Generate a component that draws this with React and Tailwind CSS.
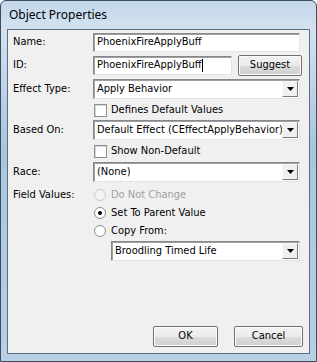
import { useState } from 'react';

const font = { fontFamily: '"DejaVu Sans Condensed", "DejaVu Sans", sans-serif' };

function Arrow() {
  return (
    <svg width="7" height="4" viewBox="0 0 7 4">
      <path d="M0 0h7L3.5 4z" fill="#000" />
    </svg>
  );
}

function Edit({ value, className = '', caret }) {
  return (
    <div
      className={`h-[19px] bg-white border border-t-[#828790] border-l-[#828790] border-r-[#e3e3e3] border-b-[#e3e3e3] shadow-[inset_1px_1px_0_#a0a0a0] flex items-center pl-[3px] text-[11px] text-black whitespace-nowrap ${className}`}
    >
      {value}
      {caret && <span className="w-px h-[13px] bg-black" />}
    </div>
  );
}

function Combo({ value, className = '' }) {
  return (
    <div
      className={`h-[20px] bg-white border border-t-[#828790] border-l-[#828790] border-r-[#e3e3e3] border-b-[#e3e3e3] shadow-[inset_1px_1px_0_#a0a0a0] flex items-center text-[11px] text-black whitespace-nowrap ${className}`}
    >
      <span className="flex-1 pl-[3px] overflow-hidden">{value}</span>
      <span className="w-[16px] h-[16px] mr-px bg-[#f0f0f0] border border-t-[#f8f8f8] border-l-[#f8f8f8] border-r-[#7a7a7a] border-b-[#7a7a7a] flex items-center justify-center">
        <Arrow />
      </span>
    </div>
  );
}

function Check({ label }) {
  return (
    <div className="flex items-center h-[15px] text-[11px] text-black whitespace-nowrap">
      <span className="w-[13px] h-[13px] bg-white border border-[#8f8f8f] shadow-[inset_1px_1px_0_#d8d8d8]" />
      <span className="ml-[4px]">{label}</span>
    </div>
  );
}

function Radio({ label, checked, disabled }) {
  return (
    <div className={`flex items-center h-[18px] text-[11px] whitespace-nowrap ${disabled ? 'text-[#a0a0a0]' : 'text-black'}`}>
      <span
        className={`w-[12px] h-[12px] rounded-full border flex items-center justify-center ${
          disabled ? 'border-[#c8c8c8] bg-[#f4f4f4]' : 'border-[#8c8c8c] bg-white'
        }`}
      >
        {checked && <span className="w-[4px] h-[4px] rounded-full bg-black" />}
      </span>
      <span className="ml-[5px]">{label}</span>
    </div>
  );
}

function Button({ children, className = '' }) {
  return (
    <div
      className={`h-[21px] rounded-[2px] border border-[#707070] bg-[linear-gradient(#f3f3f3_0%,#ebebeb_50%,#dddddd_51%,#cfcfcf_100%)] shadow-[inset_0_0_0_1px_#fcfcfc] flex items-center justify-center text-[11px] text-black ${className}`}
    >
      {children}
    </div>
  );
}

function Row({ label, children, className = '' }) {
  return (
    <div className={`flex items-center ${className}`}>
      <span className="w-[85px] pl-[5px] text-[11px] text-black whitespace-nowrap">{label}</span>
      {children}
    </div>
  );
}

export default function App() {
  const [mode] = useState('parent');
  return (
    <div style={font} className="w-[317px] h-[362px] overflow-hidden">
      <div className="w-full h-full rounded-t-[6px] border border-[#3c4c5c] bg-[linear-gradient(180deg,#c4d8ea_0%,#d2e2f0_8%,#a9c6df_40%,#b7d0e5_100%)] flex flex-col px-[6px] pb-[7px]">
        <div
          className="h-[28px] flex items-center pl-[2px] text-[12px] text-black"
          style={{ fontFamily: '"Noto Sans", "Open Sans", sans-serif' }}
        >
          Object Properties
        </div>
        <div className="flex-1 bg-[#f0f0f0] border border-[#5c6f82] flex flex-col">
          <Row label="Name:" className="mt-[3px]">
            <Edit value="PhoenixFireApplyBuff" className="w-[207px]" />
          </Row>
          <Row label="ID:" className="mt-[3px]">
            <Edit value="PhoenixFireApplyBuff" caret className="w-[139px]" />
            <Button className="w-[64px] ml-[6px]">Suggest</Button>
          </Row>
          <Row label="Effect Type:" className="mt-[3px]">
            <Combo value="Apply Behavior" className="w-[207px]" />
          </Row>
          <div className="pl-[86px] mt-[4px]">
            <Check label="Defines Default Values" />
          </div>
          <Row label="Based On:" className="mt-[2px]">
            <Combo value="Default Effect (CEffectApplyBehavior)" className="w-[207px]" />
          </Row>
          <div className="pl-[86px] mt-[4px]">
            <Check label="Show Non-Default" />
          </div>
          <Row label="Race:" className="mt-[3px]">
            <Combo value="(None)" className="w-[207px]" />
          </Row>
          <div className="flex mt-[4px]">
            <span className="w-[86px] pl-[5px] text-[11px] text-black leading-[18px] whitespace-nowrap">Field Values:</span>
            <div className="flex flex-col">
              <Radio label="Do Not Change" disabled />
              <Radio label="Set To Parent Value" checked={mode === 'parent'} />
              <Radio label="Copy From:" />
            </div>
          </div>
          <div className="pl-[103px] mt-[1px]">
            <Combo value="Broodling Timed Life" className="w-[189px]" />
          </div>
          <div className="flex-1" />
          <div className="flex justify-end pr-[6px] mb-[6px] gap-[16px]">
            <Button className="w-[65px]">OK</Button>
            <Button className="w-[69px]">Cancel</Button>
          </div>
        </div>
      </div>
    </div>
  );
}
